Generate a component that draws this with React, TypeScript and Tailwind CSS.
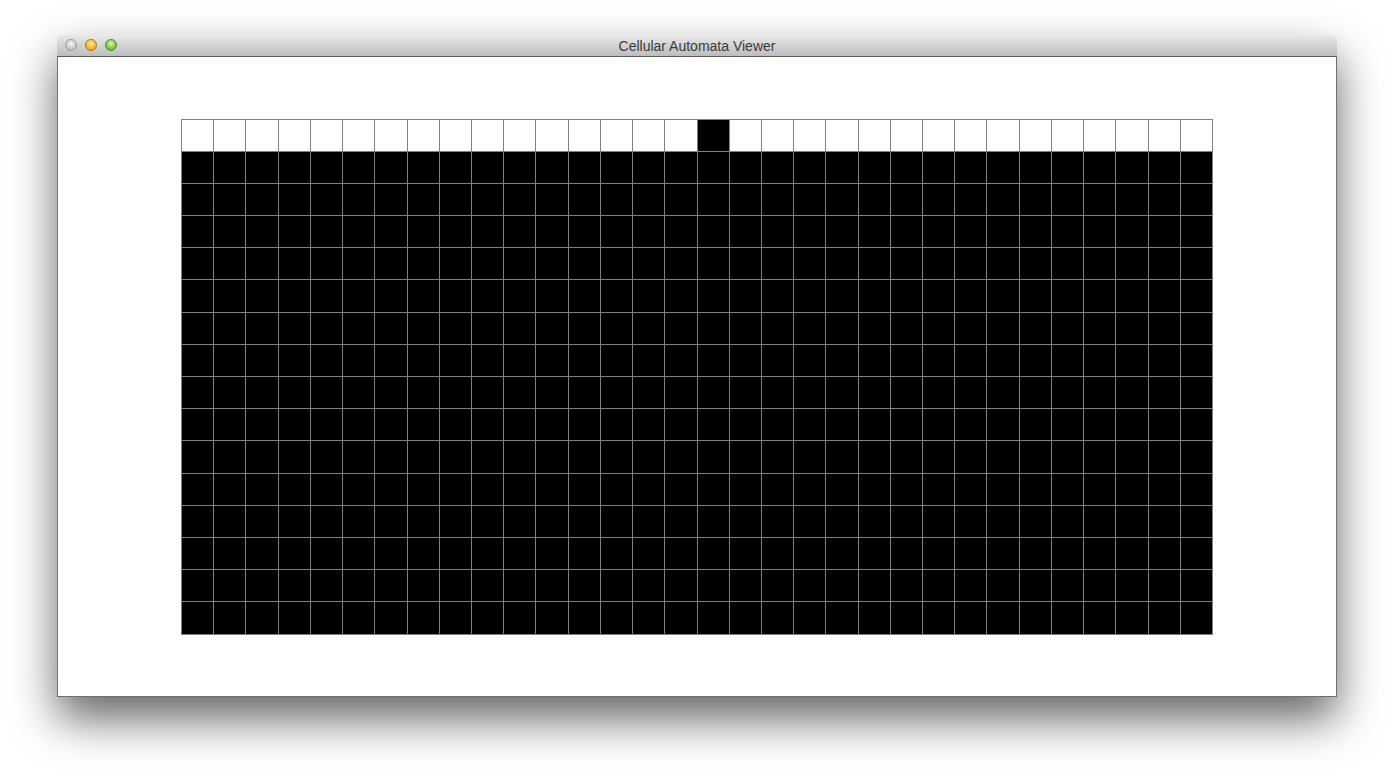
export default function App() {
  const cols = 32;
  const rows = 16;
  const cells = Array.from({ length: rows * cols }, (_, i) => {
    const r = Math.floor(i / cols);
    const c = i % cols;
    // first generation: only the middle cell is alive
    return r === 0 ? c === 16 : true;
  });

  return (
    <div className="w-[1394px] h-[776px] bg-white pt-[35px] pl-[57px] overflow-hidden">
      <div className="w-[1280px] rounded-t-[5px] shadow-[0_22px_45px_rgba(0,0,0,0.6)]">
        {/* ── Title bar ── */}
        <div className="relative h-[22px] rounded-t-[5px] bg-gradient-to-b from-[#e9e9e9] to-[#bdbdbd] border-b border-[#5a5a5a] flex items-center justify-center">
          <div className="absolute left-[8px] top-[4px] flex gap-[8px]">
            <span className="w-[12px] h-[12px] rounded-full border border-[#9a9a9a] bg-[radial-gradient(circle_at_50%_35%,#f4f4f4,#c2c2c2_70%,#a8a8a8)]" />
            <span className="w-[12px] h-[12px] rounded-full border border-[#b07818] bg-[radial-gradient(circle_at_50%_35%,#ffe9a0,#f5b232_60%,#d98e12)]" />
            <span className="w-[12px] h-[12px] rounded-full border border-[#4f8a2c] bg-[radial-gradient(circle_at_50%_35%,#d6f7a8,#7cc94a_60%,#4f9a2a)]" />
          </div>
          <span className="pt-px text-[14px] text-[#3a3a3a] font-['Liberation_Sans',sans-serif] leading-none">
            Cellular Automata Viewer
          </span>
        </div>

        {/* ── Content ── */}
        <div className="h-[640px] bg-white border-x border-b border-[#707070] flex items-center justify-center">
          <div className="w-[1032px] h-[516px] grid grid-cols-32 grid-rows-16 gap-px p-px bg-[#808080]">
            {cells.map((on, i) => (
              <div key={i} className={on ? "bg-black" : "bg-white"} />
            ))}
          </div>
        </div>
      </div>
    </div>
  );
}
